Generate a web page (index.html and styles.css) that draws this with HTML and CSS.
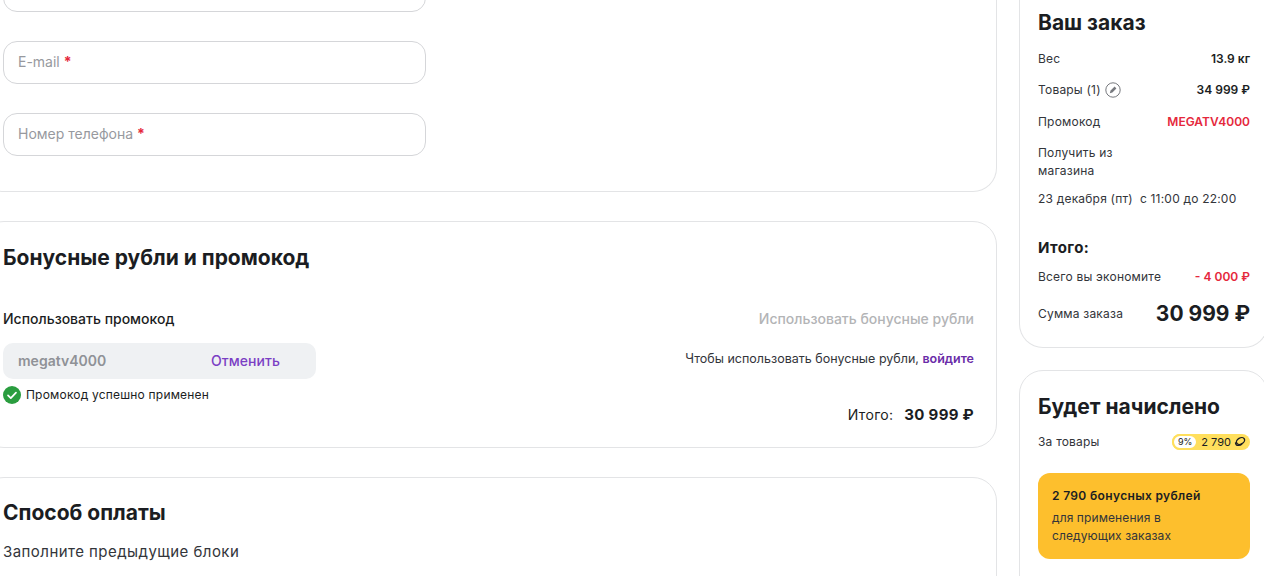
FILE: index.html
```html
<!DOCTYPE html>
<html lang="ru">
<head>
<meta charset="utf-8">
<title>Оформление заказа</title>
<link rel="stylesheet" href="styles.css">
</head>
<body>
<div class="page">
  <main class="left">
    <section class="panel panel-contact">
      <div class="field"></div>
      <div class="field"><span class="ph">E-mail <b>*</b></span></div>
      <div class="field"><span class="ph">Номер телефона <b>*</b></span></div>
    </section>
    <section class="panel panel-bonus">
      <h2 class="heading">Бонусные рубли и промокод</h2>
      <div class="bonus-grid">
        <div class="promo">
          <div class="label">Использовать промокод</div>
          <div class="promo-box"><span class="promo-code">megatv4000</span><span class="promo-cancel">Отменить</span></div>
          <div class="promo-ok">
            <svg class="ok-icon" viewBox="0 0 18 18"><circle cx="9" cy="9" r="9" fill="#2a9d3f"/><path d="M5 9.3l2.8 2.8L13 6.6" fill="none" stroke="#fff" stroke-width="1.7" stroke-linecap="round" stroke-linejoin="round"/></svg>
            <span>Промокод успешно применен</span>
          </div>
        </div>
        <div class="bonus">
          <div class="label label-off">Использовать бонусные рубли</div>
          <div class="bonus-note">Чтобы использовать бонусные рубли, <a class="login">войдите</a></div>
          <div class="bonus-total"><span>Итого:</span><strong>30 999 ₽</strong></div>
        </div>
      </div>
    </section>
    <section class="panel panel-pay">
      <h2 class="heading">Способ оплаты</h2>
      <p class="pay-note">Заполните предыдущие блоки</p>
    </section>
  </main>
  <aside class="right">
    <section class="card card-order">
      <h3 class="card-title">Ваш заказ</h3>
      <div class="row row-weight"><span>Вес</span><strong>13.9 кг</strong></div>
      <div class="row row-goods">
        <span class="goods">Товары (1)
          <svg class="edit" viewBox="0 0 16 16"><circle cx="8" cy="8" r="7.2" fill="none" stroke="#77797e" stroke-width="1"/><path d="M4.8 11.2l.8-2.6 4-4 1.8 1.8-4 4z" fill="#77797e"/></svg>
        </span><strong>34 999 ₽</strong>
      </div>
      <div class="row row-promo"><span>Промокод</span><strong class="red">MEGATV4000</strong></div>
      <div class="pickup">Получить из<br>магазина</div>
      <div class="date">23 декабря (пт)&nbsp; с 11:00 до 22:00</div>
      <h4 class="total-title">Итого:</h4>
      <div class="row row-save"><span>Всего вы экономите</span><strong class="red">- 4 000 ₽</strong></div>
      <div class="row row-sum"><span>Сумма заказа</span><strong class="sum">30 999 ₽</strong></div>
    </section>
    <section class="card card-earn">
      <h3 class="card-title card-title-earn">Будет начислено</h3>
      <div class="row row-earn">
        <span>За товары</span>
        <span class="pill"><span class="pill-pct">9%</span><span class="pill-val">2 790</span>
          <svg class="coins" viewBox="0 0 12 12"><ellipse cx="6.5" cy="5" rx="4.4" ry="3" transform="rotate(-30 6.5 5)" fill="none" stroke="#1b1d22" stroke-width="1.4"/><path d="M1.6 6.4c-.3 1.8 1 3.2 3 3 1.2-.1 2.4-.6 3.4-1.5" fill="none" stroke="#1b1d22" stroke-width="1.4"/></svg>
        </span>
      </div>
      <div class="note">
        <div class="note-title">2 790 бонусных рублей</div>
        <div class="note-text">для применения в следующих заказах</div>
      </div>
    </section>
  </aside>
</div>
</body>
</html>
```
FILE: styles.css
```css
* { box-sizing: border-box; }
html, body { margin: 0; height: 576px; overflow: hidden; background: #fff; }
body { font-family: Inter, "Noto Sans", sans-serif; color: #1b1d22; }
.page { display: flex; align-items: flex-start; height: 607px; overflow: hidden; margin-top: -31px; margin-left: -20px; }
.left { width: 1017px; flex: none; display: flex; flex-direction: column; gap: 29px; }
.panel { border: 1px solid #e3e4e6; border-radius: 24px; padding: 0 22px; }
.panel-contact { border-top: 0; padding-bottom: 35px; display: flex; flex-direction: column; gap: 29px; }
.field { width: 423px; height: 43px; border: 1px solid #d5d6d9; border-radius: 14px; display: flex; align-items: center; padding: 0 14px 2px; }
.ph { font: 14px Inter, sans-serif; color: #97999e; }
.ph b { color: #e5283c; font-weight: 700; }
.panel-bonus { height: 227px; padding-top: 22px; }
.heading { margin: 0; font: 700 21px/28px Inter, sans-serif; color: #1b1d22; }
.bonus-grid { display: flex; justify-content: space-between; margin-top: 37px; }
.label { font: 500 14px/20px Inter, sans-serif; }
.label-off { color: #b3b4b6; text-align: right; }
.promo-box { width: 313px; height: 36px; margin-top: 14px; background: #eff1f3; border-radius: 10px; display: flex; align-items: center; padding: 0 0 2px 15px; }
.promo-code { width: 193px; font: 600 14px Inter, sans-serif; color: #8f9297; }
.promo-cancel { font: 500 14px Inter, sans-serif; color: #7b3fc4; letter-spacing: .05px; }
.promo-ok { display: flex; align-items: center; gap: 5px; margin-top: 7px; font: 12px/18px Inter, sans-serif; letter-spacing: .2px; }
.ok-icon { width: 18px; height: 18px; }
.bonus { display: flex; flex-direction: column; align-items: flex-end; }
.bonus-note { font: 12.5px/18px Inter, sans-serif; margin-top: 21px; color: #33353a; }
.login { color: #6a2ca8; font-weight: 600; }
.bonus-total { display: flex; align-items: center; gap: 11px; margin-top: 37px; font: 14px/20px Inter, sans-serif; letter-spacing: .3px; }
.bonus-total strong { font: 700 15px/20px Inter, sans-serif; }
.panel-pay { height: 140px; padding-top: 21px; }
.pay-note { margin: 15px 0 0; font: 15px/20px Inter, sans-serif; letter-spacing: .45px; color: #33353a; }
.right { margin-left: 22px; width: 249px; flex: none; display: flex; flex-direction: column; gap: 22px; }
.card { border: 1px solid #e3e4e6; border-radius: 24px; padding: 0 17px 0 18px; }
.card-order { height: 379px; border-top: 0; padding-top: 40px; }
.card-title { margin: 0; font: 700 21px/28px Inter, sans-serif; }
.row { display: flex; justify-content: space-between; align-items: center; font: 12px/18px Inter, sans-serif; letter-spacing: .2px; color: #33353a; }
.row strong { font-weight: 600; color: #1b1d22; letter-spacing: 0; }
.row strong.red, .red { color: #e5283c; }
.row-weight { margin-top: 13px; }
.row-goods { margin-top: 13px; }
.goods { display: flex; align-items: center; gap: 4px; }
.edit { width: 16px; height: 16px; }
.row-promo { margin-top: 14px; }
.pickup { margin-top: 13px; font: 12px/18px Inter, sans-serif; letter-spacing: .2px; color: #33353a; }
.date { margin-top: 10px; font: 12px/18px Inter, sans-serif; letter-spacing: .2px; color: #33353a; }
.total-title { margin: 30px 0 0; font: 700 15px/20px Inter, sans-serif; letter-spacing: .4px; }
.row-save { margin-top: 10px; }
.row-sum { margin-top: 15px; }
.row strong.sum { font: 700 21px/26px Inter, sans-serif; }
.card-earn { height: 240px; padding-top: 22px; }
.card-title-earn { line-height: 28px; }
.row-earn { margin-top: 12px; }
.pill { display: flex; align-items: center; height: 16px; background: #ffdf5d; border-radius: 8px; padding-right: 4px; font-size: 11px; letter-spacing: 0; color: #1b1d22; }
.pill-pct { background: #fff; border: 2px solid #ffdf5d; border-radius: 8px; height: 16px; line-height: 12px; padding: 0 4px; font-size: 9px; }
.pill-val { margin-left: 3px; }
.coins { width: 12px; height: 12px; margin-left: 3px; }
.note { margin-top: 22px; height: 86px; background: #fdbf2d; border-radius: 12px; padding: 14px; }
.note-title { font: 600 12px/18px Inter, sans-serif; letter-spacing: .35px; }
.note-text { margin-top: 4px; font: 12px/18px Inter, sans-serif; letter-spacing: .1px; color: #33353a; width: 150px; }
```
